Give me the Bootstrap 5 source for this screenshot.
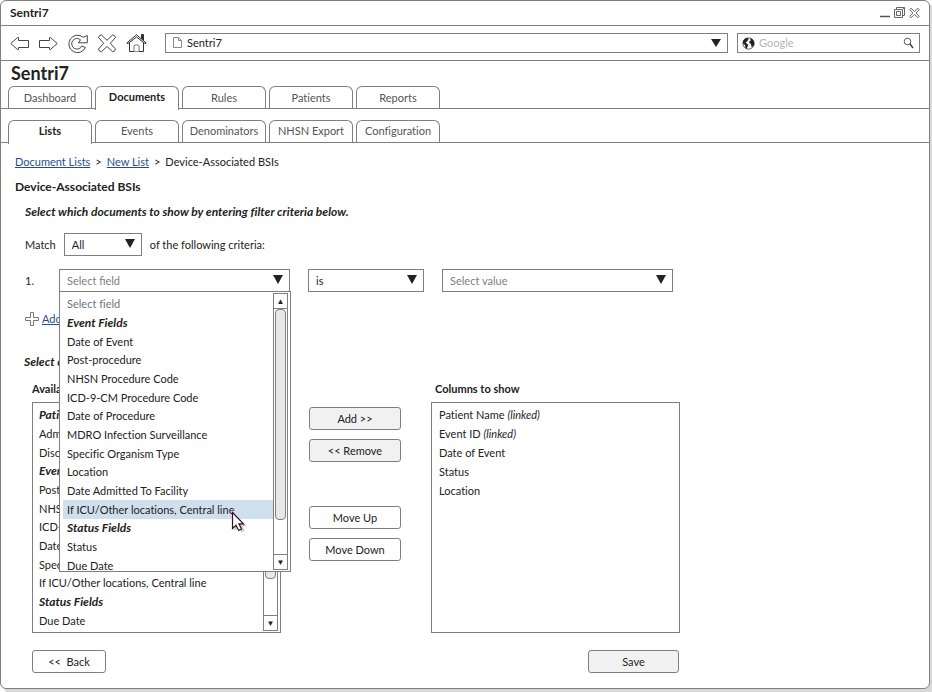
<!DOCTYPE html>
<html lang="en">
<head>
<meta charset="utf-8">
<meta name="viewport" content="width=device-width, initial-scale=1">
<title>Sentri7</title>
<link href="https://cdn.jsdelivr.net/npm/bootstrap@5.3.0/dist/css/bootstrap.min.css" rel="stylesheet">
<style>
:root{--line:#7f7f7f;--ink:#222}
body{font-family:Lato,"Open Sans",sans-serif;font-size:11px;line-height:16px;font-variant-ligatures:none;color:var(--ink);background:#fff}
.win{border:1px solid var(--line);border-radius:6px;margin:0 2px 3px 0;box-shadow:4px 4px 0 #d8d8d8;min-height:calc(100vh - 3px);background:#fff}
.line-b{border-bottom:1px solid var(--line)}
.titlebar{height:25px;padding:0 9px;font-size:12px}
.titlebar svg,.tools svg{display:block}
.tools{height:35px;padding:0 9px 0 8px}
.nav-icons{gap:9px;margin-right:18px}
.plain{border:0;background:none;padding:0;color:inherit}
.box{border:1px solid var(--line);background:#fff;height:20px}
.box input{border:0;outline:0;min-width:0;padding:0;color:inherit;background:none;line-height:16px}
.box input::placeholder{color:#b5b5b5;opacity:1}
.addr{padding:0 6px 0 7px;gap:5px}
.find{width:183px;margin-left:9px}
.brand{font-size:18px;line-height:22px;font-weight:700;padding:1px 10px 2px;margin:0}
.tabs{border-bottom:1px solid var(--line);padding:0 7px;gap:3px;height:23px}
.tabs + .tabs{margin-top:11px}
.tabs a{width:84px;height:22px;border:1px solid var(--line);border-bottom:0;border-radius:6px 6px 0 0;background:#fff;color:#555;text-align:center;text-decoration:none;line-height:21px;white-space:nowrap}
.tabs a.active,.tabs + .tabs a{line-height:20px}
.tabs a.active{color:var(--ink);font-weight:700;height:24px}
.page a{color:#1f4e96}
.page{padding:11px 14px 0}
.crumbs{gap:5px}
.head{font-size:12px;line-height:16px;font-weight:700;margin:0}
.head.minor{font-size:11px}
.page-title{margin-top:9px}
.form-select{font-size:11px;line-height:16px;height:23px;padding:0 24px 0 7px;border:1px solid var(--line);border-radius:0;color:var(--ink);background-color:#fff;background-position:right 6px top 5px;background-size:10px 9px;background-image:url("data:image/svg+xml,%3Csvg xmlns='http://www.w3.org/2000/svg' viewBox='0 0 10 9'%3E%3Cpath d='M0 0h10L5 9z' fill='%23222'/%3E%3C/svg%3E")}
.form-select.dim{color:#808080}
.all{width:78px}
.is{width:116px;margin:0 18px}
.form-area{max-width:665px;padding-left:17px}
.rules{margin:0 7px 0 -7px}
.intro{margin:9px 0 13px -7px}
.half{flex:1 1 0;min-width:0}
.num{width:34px}
.crit{margin-top:13px}
.add{margin-top:19px;gap:3px}
.pick-title{margin:27px 0 11px -8px}
.picker{border:1px solid var(--line);background:#fff;overflow:hidden}
.menu{position:absolute;top:22px;left:0;width:calc(100% + 1px);height:281px;z-index:5}
.opts{list-style:none;margin:0;min-width:0}
.opts li{display:flex;align-items:center;padding:0 0 0 3px;line-height:18px;white-space:pre}
.menu .opts{padding:3px 0 0 3px;height:283px}
.menu .opts li{padding-left:4px;flex:1 1 0}
.opts .pick{background:#d0dfee}
.opts .grp{font-weight:700;font-style:italic;font-size:12px}
.bar{width:15px;margin:1px 2px 1px 0;border:1px solid var(--line);background:#fff}
.bar .up,.bar .down{height:15px;font-size:8px;line-height:14px;text-align:center}
.bar .up{border-bottom:1px solid var(--line)}
.bar .down{border-top:1px solid var(--line)}
.thumb{height:211px;margin:0 1px;border:1px solid var(--line);border-radius:4px;background:#e8e8e8}
.avail .thumb{height:159px}
.list{height:231px;margin-top:5px}
.list .opts{padding:3px 0 2px 3px}
.avail .opts li{flex:1 1 0}
.shown .opts li{height:19px}
.shown .opts{padding:2px 0 0 4px}
.act{width:92px;margin:0 30px 0 28px;padding-top:26px}
.act .cmd{margin-bottom:9px}
.act .gap-above{margin-top:35px}
.cmd{border:1px solid var(--line);border-radius:3px;height:23px;padding:0;font-size:11px;line-height:20px;color:var(--ink);background:#fff}
.cmd.fill{background:#f1f1f1}
.back{width:74px}
.save{width:91px}
.foot{margin:17px 1px 15px 0}
.pointer{position:absolute;left:171px;top:242px;z-index:6;pointer-events:none}
</style>
<script src="https://cdn.jsdelivr.net/npm/bootstrap@5.3.0/dist/js/bootstrap.bundle.min.js"></script>
</head>
<body>
<div class="win">
  <header>
    <div class="titlebar line-b d-flex align-items-center">
      <span class="fw-bold flex-grow-1">Sentri7</span>
      <div class="d-flex align-items-center gap-1">
        <button class="plain" aria-label="Minimize"><svg width="10" height="12" viewBox="0 0 10 12"><path d="M0 9.500h10" stroke="#555" stroke-width="1.500"/></svg></button>
        <button class="plain" aria-label="Restore"><svg width="11" height="12" viewBox="0 0 11 12" fill="#fff" stroke="#666"><path d="M2.500 2.500V.5H10.500V8.500H8.500"/><path d="M.5 2.500H8.500V10.500H.5zM8.500 2.500L10.500.5M2.500 4.500H6.500V8.500H2.500z"/></svg></button>
        <button class="plain" aria-label="Close"><svg width="11" height="12" viewBox="0 0 11 12" fill="#fff" stroke="#555" stroke-width=".9"><path d="M.6 2.700L2 1.300l3.500 3.200L9 1.300l1.400 1.400L7.100 6l3.300 3.300L9 10.700 5.500 7.500 2 10.700.6 9.300 3.900 6z"/></svg></button>
      </div>
    </div>
    <div class="tools line-b d-flex align-items-center">
      <nav class="nav-icons d-flex align-items-center" aria-label="Browser">
        <button class="plain" aria-label="Back"><svg width="20" height="20" viewBox="0 0 20 20" fill="#fff" stroke="#444"><path d="M1.800 10.500L8.500 4.500Q9.500 3.800 9.500 5V7.500H19.500V14.500H9.500V16Q9.500 17.200 8.500 16.500z" stroke-linejoin="round"/></svg></button>
        <button class="plain" aria-label="Forward"><svg width="20" height="20" viewBox="0 0 20 20" fill="#fff" stroke="#444"><path d="M19.200 10.500L12.500 4.500Q11.500 3.800 11.500 5V7.500H1.500V14.500H11.500V16Q11.500 17.200 12.500 16.500z" stroke-linejoin="round"/></svg></button>
        <button class="plain" aria-label="Reload"><svg width="21" height="20" viewBox="0 0 21 20" fill="#fff" stroke="#444" stroke-linejoin="round"><path d="M16.200 4.300A8.700 8.700 0 1 0 18.500 14.500L14.800 13A5.300 5.300 0 1 1 13.500 6.800L11.500 9.800H20.300V2.500z"/></svg></button>
        <button class="plain" aria-label="Stop"><svg width="20" height="20" viewBox="0 0 20 20" fill="#fff" stroke="#444" stroke-linejoin="round"><path d="M1.500 4.500Q2 2 4.500 2L10 7.300 15.500 2Q18 2 18.500 4.500L13.300 10.300l5.200 5.700Q18 18.700 15.500 18.700L10 13.500 4.500 18.700Q2 18.700 1.500 16L6.700 10.300z"/></svg></button>
        <button class="plain" aria-label="Home"><svg width="21" height="20" viewBox="0 0 21 20" fill="#fff" stroke="#333"><path d="M3.500 9.500V18.500H17.500V9.500"/><path d="M8 18.500V13Q8 12 9 12H12Q13 12 13 13V18.500" stroke="#777"/><path d="M15.500 6V1.500H17.500V8" fill="#333"/><path d="M.8 10L10.500 1.800 20.200 10 19 10.500 10.500 4 2 10.500z"/></svg></button>
      </nav>
      <div class="box addr d-flex align-items-center flex-grow-1">
        <svg class="flex-shrink-0" width="9" height="12" viewBox="0 0 9 12" fill="#fff" stroke="#888"><path d="M.5.500h5l3 3v7h-8zM5.500.500v3h3"/></svg>
        <input class="flex-grow-1" type="text" value="Sentri7" aria-label="Address">
        <button class="plain" aria-label="Address history"><svg width="10" height="8" viewBox="0 0 10 8"><path d="M0 0h10L5 8z" fill="#222"/></svg></button>
      </div>
      <div class="box find d-flex align-items-center px-1">
        <svg class="flex-shrink-0 me-1" width="13" height="13" viewBox="0 0 13 13"><circle cx="6.500" cy="6.500" r="5.600" fill="#fff" stroke="#333" stroke-width=".8"/><path d="M1 4L3 1.500 6 1l.5 1.500L5 4.500 3.500 5.500 5.500 7 6 8.500 4.500 12 3.500 11 3 8 1 6.500zM8 2l2-.5L12 4.500l.3 3L11 9.500 9.500 10 9 7 7.300 6 7.500 4 9 3.500z" fill="#222"/></svg>
        <input class="flex-grow-1" type="search" placeholder="Google" aria-label="Search Google">
        <button class="plain" aria-label="Search"><svg width="12" height="12" viewBox="0 0 12 12" fill="none" stroke="#444"><circle cx="4.500" cy="4.500" r="3.300" stroke-width=".9"/><path d="M6.800 6.800L10 11" stroke-width="1.600"/></svg></button>
      </div>
    </div>
    <h1 class="brand">Sentri7</h1>
    <nav class="tabs d-flex" aria-label="Main">
      <a href="#">Dashboard</a><a href="#" class="active">Documents</a><a href="#">Rules</a><a href="#">Patients</a><a href="#">Reports</a>
    </nav>
    <nav class="tabs d-flex" aria-label="Documents">
      <a href="#" class="active">Lists</a><a href="#">Events</a><a href="#">Denominators</a><a href="#">NHSN Export</a><a href="#">Configuration</a>
    </nav>
  </header>
  <main class="page">
    <nav class="crumbs d-flex" aria-label="Breadcrumb"><a href="#">Document Lists</a><span>&gt;</span><a href="#">New List</a><span>&gt;</span><span>Device-Associated BSIs</span></nav>
    <h2 class="head page-title">Device-Associated BSIs</h2>
    <div class="form-area">
      <p class="head fst-italic intro">Select which documents to show by entering filter criteria below.</p>
      <div class="rules">
        <div class="d-flex align-items-center gap-2">
          <label for="all">Match</label>
          <select id="all" class="form-select all"><option>All</option><option>Any</option></select>
          <span>of the following criteria:</span>
        </div>
        <div class="crit d-flex align-items-center">
          <label class="num" for="field">1.</label>
          <div class="position-relative half">
            <select id="field" class="form-select dim"><option>Select field</option></select>
            <div class="picker menu d-flex">
              <ul class="opts flex-grow-1 d-flex flex-column" role="listbox" aria-label="Fields">
                <li role="option" class="text-secondary">Select field</li>
                <li class="grp">Event Fields</li>
                <li role="option">Date of Event</li>
                <li role="option">Post-procedure</li>
                <li role="option">NHSN Procedure Code</li>
                <li role="option">ICD-9-CM Procedure Code</li>
                <li role="option">Date of Procedure</li>
                <li role="option">MDRO Infection Surveillance</li>
                <li role="option">Specific Organism Type</li>
                <li role="option">Location</li>
                <li role="option">Date Admitted To Facility</li>
                <li role="option" class="pick" aria-selected="true">If ICU/Other locations, Central line</li>
                <li class="grp">Status Fields</li>
                <li role="option">Status</li>
                <li role="option">Due Date</li>
              </ul>
              <div class="bar d-flex flex-column flex-shrink-0"><div class="up">▲</div><div class="thumb"></div><div class="down mt-auto">▼</div></div>
            </div>
            <svg class="pointer" width="18" height="24" viewBox="0 0 18 24"><path d="M4.500 4v16l4-3.500 3 5 3-2-2-4h4.500z" fill="#000" opacity=".2"/><path d="M2.500 1.500V17.500L6 14.200 8.700 19.500 11.500 18 8.900 12.800H13.500z" fill="#fff" stroke="#3a1020" stroke-width="1.200"/></svg>
          </div>
          <select class="form-select is" aria-label="Operator"><option>is</option></select>
          <div class="half"><select class="form-select dim" aria-label="Value"><option>Select value</option></select></div>
        </div>
        <div class="add d-flex align-items-center">
          <svg width="14" height="14" viewBox="0 0 14 14" fill="#fff" stroke="#777"><path d="M5.500.500h3v5h5v3h-5v5h-3v-5h-5v-3h5z"/></svg>
          <a href="#">Add</a>
        </div>
      </div>
      <p class="head fst-italic pick-title">Select columns</p>
      <div class="d-flex">
        <section class="avail half">
          <h3 class="head minor">Available</h3>
          <div class="picker list d-flex">
            <ul class="opts flex-grow-1 d-flex flex-column" role="listbox" aria-label="Available columns">
              <li class="grp">Patient Fields</li>
              <li role="option">Admit Date</li>
              <li role="option">Discharge Date</li>
              <li class="grp">Event Fields</li>
              <li role="option">Post-procedure</li>
              <li role="option">NHSN Procedure Code</li>
              <li role="option">ICD-9-CM Procedure Code</li>
              <li role="option">Date of Procedure</li>
              <li role="option">Specific Organism Type</li>
              <li role="option">If ICU/Other locations, Central line</li>
              <li class="grp">Status Fields</li>
              <li role="option">Due Date</li>
            </ul>
            <div class="bar d-flex flex-column flex-shrink-0"><div class="up">▲</div><div class="thumb"></div><div class="down mt-auto">▼</div></div>
          </div>
        </section>
        <div class="act d-flex flex-column">
          <button class="cmd fill">Add &gt;&gt;</button>
          <button class="cmd fill">&lt;&lt; Remove</button>
          <button class="cmd gap-above">Move Up</button>
          <button class="cmd">Move Down</button>
        </div>
        <section class="shown half">
          <h3 class="head minor ps-1">Columns to show</h3>
          <div class="picker list d-flex">
            <ul class="opts flex-grow-1" role="listbox" aria-label="Columns to show">
              <li role="option">Patient Name <i>(linked)</i></li>
              <li role="option">Event ID <i>(linked)</i></li>
              <li role="option">Date of Event</li>
              <li role="option">Status</li>
              <li role="option">Location</li>
            </ul>
          </div>
        </section>
      </div>
      <div class="foot d-flex justify-content-between">
        <button class="cmd back">&lt;&lt;&nbsp; Back</button>
        <button class="cmd fill save">Save</button>
      </div>
    </div>
  </main>
</div>
</body>
</html>
